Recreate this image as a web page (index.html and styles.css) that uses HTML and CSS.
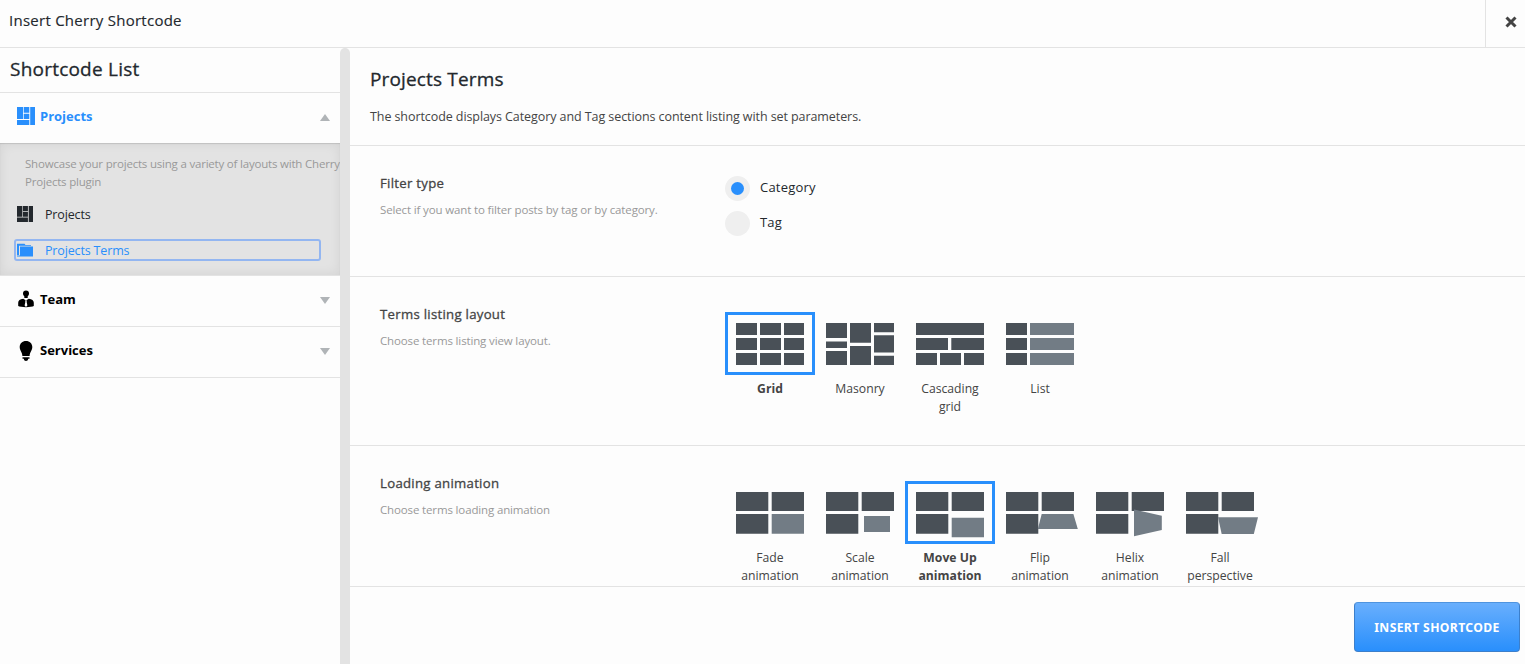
FILE: index.html
```html
<!DOCTYPE html>
<html lang="en">
<head>
<meta charset="utf-8">
<title>Insert Cherry Shortcode</title>
<link rel="stylesheet" href="styles.css">
</head>
<body>
<svg class="defs" width="0" height="0">
  <symbol id="tiles" viewBox="0 0 18 18"><path d="M0 0h6v12H0zM6.7 0h5.6v5.8H6.700zM6.700 6.800h5.600V12H6.700zM13.200 0H18v18h-4.800zM0 13h12.300v5H0z"/></symbol>
</svg>
<div class="modal">
  <header class="topbar">
    <h1 class="topbar-title"><span>Insert Cherry Shortcode</span></h1>
    <button class="close" aria-label="Close"><svg width="12" height="12" viewBox="0 0 12 12"><path d="M1.500 1.500l9 9M10.500 1.500l-9 9"/></svg></button>
  </header>
  <div class="body">
    <aside class="sidebar">
      <h2 class="sidebar-title"><span>Shortcode List</span></h2>
      <div class="group active">
        <svg class="group-icon" width="18" height="18"><use href="#tiles"/></svg>
        <span class="group-name">Projects</span>
        <svg class="arrow" width="10" height="7"><path d="M5 0l5 7H0z"/></svg>
      </div>
      <div class="submenu">
        <p class="submenu-text">Showcase your projects using a variety of layouts with Cherry<br>Projects plugin</p>
        <a class="item"><svg width="16" height="16"><use href="#tiles"/></svg><span>Projects</span></a>
        <a class="item current"><svg width="16" height="14" viewBox="0 0 16 14"><path d="M0 .8h7.500l1 1.200H14v.8H2V12H0z"/><path d="M3 3.500h13V13.500H0v-1h3z"/></svg><span>Projects Terms</span></a>
      </div>
      <div class="group">
        <svg class="group-icon" width="18" height="18" viewBox="0 0 18 18"><circle cx="9" cy="3.500" r="3"/><path d="M7.300 5h3.400v3H7.300z"/><path d="M1.200 16v-3.200C1.200 10.500 3 9.300 6.200 8.800L9 10.600l2.800-1.800c3.200.5 5 1.700 5 4V16c-2 1.500-13.600 1.500-15.600 0z"/><path class="tie" d="M8 10.500h2l-.4 1.200.8 3.800L9 17l-1.400-1.500.8-3.800z"/></svg>
        <span class="group-name">Team</span>
        <svg class="arrow" width="10" height="7"><path d="M0 0h10L5 7z"/></svg>
      </div>
      <div class="group">
        <svg class="group-icon" width="18" height="20" viewBox="0 0 18 20"><path d="M9 0c3.700 0 6.300 2.600 6.300 6 0 3.600-2.400 4.800-2.700 9H5.400C5.100 10.800 2.700 9.600 2.700 6 2.700 2.600 5.300 0 9 0zM5.500 16.300h7v1.500h-1.300C11 19.300 10.200 20 9 20s-2-.7-2.200-2.200H5.500z"/></svg>
        <span class="group-name">Services</span>
        <svg class="arrow" width="10" height="7"><path d="M0 0h10L5 7z"/></svg>
      </div>
    </aside>
    <div class="scrollbar"></div>
    <main class="main">
      <div class="content">
        <section class="intro">
          <h2 class="intro-title"><span>Projects Terms</span></h2>
          <p class="intro-text"><span>The shortcode displays Category and Tag sections content listing with set parameters.</span></p>
        </section>
        <section class="row row-filter">
          <div class="label"><h3>Filter type</h3><p>Select if you want to filter posts by tag or by category.</p></div>
          <div class="radios">
            <label class="radio checked"><i></i><span>Category</span></label>
            <label class="radio"><i></i><span>Tag</span></label>
          </div>
        </section>
        <section class="row row-layout">
          <div class="label"><h3>Terms listing layout</h3><p>Choose terms listing view layout.</p></div>
          <div class="options">
            <div class="option selected"><svg width="90" height="63"><path d="M11 11h21v12H11zM35 11h21v12H35zM59 11h20v12H59zM11 26h21v12H11zM35 26h21v12H35zM59 26h20v12H59zM11 41h21v12H11zM35 41h21v12H35zM59 41h20v12H59z"/></svg><span>Grid</span></div>
            <div class="option"><svg width="90" height="63"><path d="M11 11h21v15H11zM11 29.500h21v6.500H11zM11 39h21v14H11zM35 11h21v19.700H35zM35 34h21v19H35zM59 11h20v9.200H59zM59 23.300h20v17.200H59zM59 43.800h20V53H59z"/></svg><span>Masonry</span></div>
            <div class="option"><svg width="90" height="63"><path d="M11 11h68v12H11zM11 26h32v12H11zM46.300 26H79v12H46.300zM11 41h21v12H11zM35 41h21v12H35zM59 41h20v12H59z"/></svg><span>Cascading<br>grid</span></div>
            <div class="option"><svg width="90" height="63"><path d="M11 11h21v12H11zM11 26h21v12H11zM11 41h21v12H11z"/><path class="light" d="M35 11h44v12H35zM35 26h44v12H35zM35 41h44v12H35z"/></svg><span>List</span></div>
          </div>
        </section>
        <section class="row row-animation">
          <div class="label"><h3>Loading animation</h3><p>Choose terms loading animation</p></div>
          <div class="options">
            <div class="option"><svg width="90" height="63"><path d="M11 11h32.300v19H11zM46.700 11H79v19H46.700zM11 33h32.300v19.700H11z"/><path class="light" d="M46.700 33H79v19.700H46.700z"/></svg><span>Fade<br>animation</span></div>
            <div class="option"><svg width="90" height="63"><path d="M11 11h32.300v19H11zM46.700 11H79v19H46.700zM11 33h32.300v19.700H11z"/><path class="light" d="M49 35h26v16H49z"/></svg><span>Scale<br>animation</span></div>
            <div class="option selected"><svg width="90" height="63"><path d="M11 11h32.300v19H11zM46.700 11H79v19H46.700zM11 33h32.300v19.700H11z"/><path class="light" d="M46.700 36.700H79v19.600H46.700z"/></svg><span>Move Up<br>animation</span></div>
            <div class="option"><svg width="90" height="63"><path d="M11 11h32.300v19H11zM46.700 11H79v19H46.700zM11 33h32.300v19.700H11z"/><path class="light" d="M46.700 33h31.700L82.800 48h-40z"/></svg><span>Flip<br>animation</span></div>
            <div class="option"><svg width="90" height="63"><path d="M11 11h32.300v19H11zM46.700 11H79v19H46.700zM11 33h32.300v19.700H11z"/><path class="light" d="M49 28.600l27.800 6.200V49L49 55.200z"/></svg><span>Helix<br>animation</span></div>
            <div class="option"><svg width="90" height="63"><path d="M11 11h32.300v19H11zM46.700 11H79v19H46.700zM11 33h32.300v19.700H11z"/><path class="light" d="M43 36.200h40L78.800 53H46.700z"/></svg><span>Fall<br>perspective</span></div>
          </div>
        </section>
      </div>
      <footer class="footer"><button class="insert"><span>INSERT SHORTCODE</span></button></footer>
    </main>
  </div>
</div>
</body>
</html>
```
FILE: styles.css
```css
* { box-sizing: border-box; margin: 0; padding: 0; }
body { font-family: "Open Sans", "Noto Sans", sans-serif; color: #23282d; background: #fdfdfd; overflow: hidden; }
.defs { position: absolute; }
svg { display: block; flex: none; }
.modal { height: 664px; display: flex; flex-direction: column; }

.topbar { height: 48px; flex: none; display: flex; justify-content: space-between; border-bottom: 1px solid #e3e3e3; }
.topbar-title { padding: 10px 0 0 9px; font-size: 15px; line-height: 20px; font-weight: 400; letter-spacing: 0.26px; -webkit-text-stroke: 0.15px; }
.close { width: 40px; padding: 16px 0 0 19px; border: 0; border-left: 1px solid #e3e3e3; background: none; display: flex; align-items: flex-start; }
.close path { stroke: #444; stroke-width: 3; fill: none; }

.body { flex: 1; min-height: 0; display: flex; }
.sidebar { width: 340px; flex: none; }
.sidebar-title { height: 45px; padding: 8px 0 0 10px; font-size: 19px; line-height: 26px; font-weight: 400; letter-spacing: 0.22px; -webkit-text-stroke: 0.3px; border-bottom: 1px solid #e3e3e3; }
.group { height: 51px; display: flex; align-items: flex-start; padding: 14px 10px 0 17px; border-bottom: 1px solid #e3e3e3; color: #000; }
.group.active { height: 50px; border-bottom: 0; color: #298ffc; }
.group svg { fill: currentColor; }
.group .tie { fill: #fdfdfd; }
.group-name { flex: 1; margin-left: 5px; font-size: 13px; line-height: 18px; font-weight: 700; }
.group .arrow { margin-top: 7px; fill: #b0b4b7; }
.submenu { height: 133px; padding-top: 12px; background: #e3e3e3; border-bottom: 1px solid #e3e3e3; box-shadow: inset 0 0 12px rgba(0,0,0,.08), inset 0 1px 1px rgba(0,0,0,.12); }
.submenu-text { padding-left: 25px; font-size: 11.5px; line-height: 18px; color: #999; white-space: nowrap; letter-spacing: -0.2px; }
.item { display: flex; height: 22px; margin: 12px 0 0 14px; padding-left: 3px; width: 307px; font-size: 12.5px; line-height: 24px; letter-spacing: -0.15px; }
.item svg { margin-top: 3px; fill: #23282d; }
.item span { margin-left: 12px; }
.item.current { margin-top: 14px; border: 2px solid #93b6f1; border-radius: 3px; padding-left: 1px; line-height: 20px; color: #298ffc; }
.item.current svg { margin-top: 2px; fill: #298ffc; }

.scrollbar { width: 10px; flex: none; background: #e3e3e3; border-radius: 5px 5px 0 0; }

.main { flex: 1; min-width: 0; display: flex; flex-direction: column; }
.content { height: 538px; flex: none; overflow: hidden; }
.intro { height: 98px; padding: 18px 0 0 20px; border-bottom: 1px solid #e3e3e3; }
.intro-title { font-size: 19px; line-height: 26px; font-weight: 400; letter-spacing: 0.15px; -webkit-text-stroke: 0.3px; }
.intro-text { margin-top: 16px; font-size: 12.5px; line-height: 18px; color: #444; letter-spacing: -0.08px; }
.row { display: flex; padding: 27px 0 0 30px; border-bottom: 1px solid #e3e3e3; }
.row-filter { height: 131px; }
.row-layout, .row-animation { height: 169px; }
.label { width: 345px; flex: none; }
.label h3 { font-size: 13.2px; line-height: 20px; font-weight: 400; letter-spacing: 0.28px; -webkit-text-stroke: 0.3px; color: #444; }
.label p { margin-top: 8px; font-size: 11.5px; line-height: 18px; color: #999; letter-spacing: -0.14px; }
.radios { padding-top: 3px; display: flex; flex-direction: column; gap: 10px; }
.radio { display: flex; height: 25px; font-size: 13px; line-height: 23px; letter-spacing: 0.2px; }
.radio i { width: 25px; height: 25px; border-radius: 50%; background: #efefef; margin-right: 10px; display: flex; align-items: center; justify-content: center; }
.radio.checked i::before { content: ""; width: 13px; height: 13px; border-radius: 50%; background: #298ffc; }
.options { display: flex; padding-top: 8px; }
.option { width: 90px; text-align: center; font-size: 12.2px; line-height: 18px; color: #444; }
.option svg { fill: #495057; margin-bottom: 5px; }
.option .light { fill: #727c85; }
.option.selected { font-weight: 700; }
.option.selected svg { outline: 3px solid #298ffc; outline-offset: -3px; }

.footer { flex: 1; display: flex; justify-content: flex-end; padding: 15px 5px 0 0; border-top: 1px solid #e3e3e3; }
.insert { width: 166px; height: 50px; padding-top: 2px; border: 1px solid #3c7fcb; border-top-color: #4f94df; border-radius: 4px; background: linear-gradient(#69affd, #298ffc); color: #fff; font: 700 12.2px/20px "Noto Sans", "Open Sans", sans-serif; letter-spacing: 0.35px; }
```
